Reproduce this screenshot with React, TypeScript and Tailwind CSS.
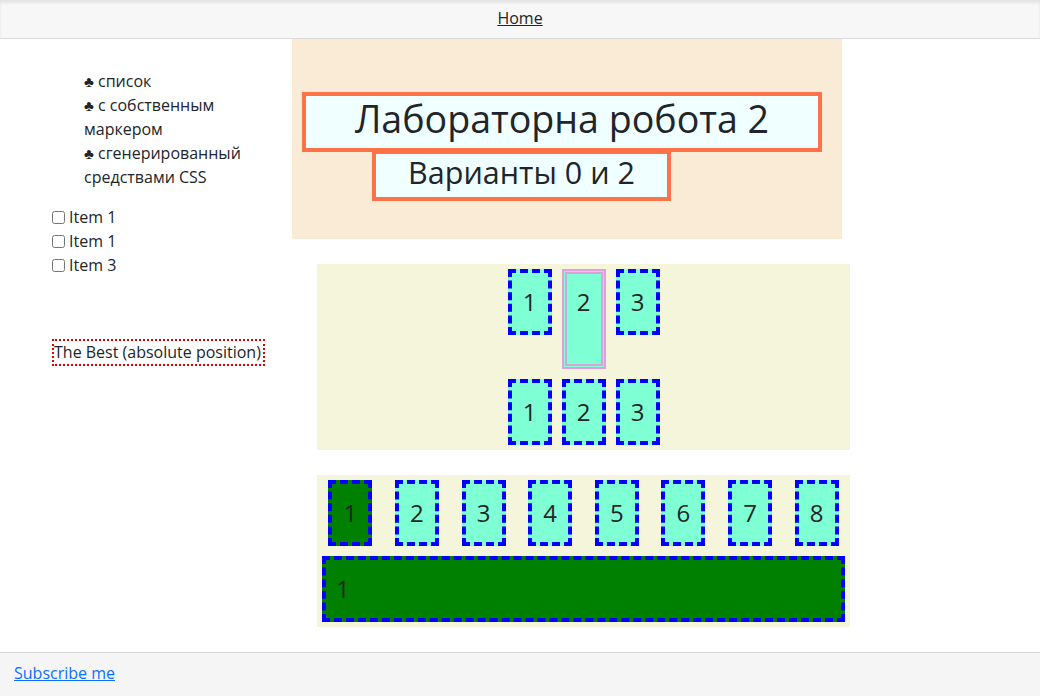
import React from "react";

const item =
  "w-[44px] h-[66px] m-[5px] border-[4px] border-dashed border-[#0000ff] bg-[#7fffd4] px-[10px] py-[11px] text-center text-[24px] leading-[36px] text-[#212529]";

const Club = () => <span className="leading-none text-[15px]">♣</span>;

export default function App() {
  return (
    <div className="min-h-[696px] flex flex-col bg-white font-['Open_Sans',sans-serif] text-[16px] leading-[24px] text-[#212529]">
      <header className="h-[39px] shrink-0 border-b border-[#d9d9d9] bg-[#f7f7f7] shadow-[inset_0_3px_3px_rgba(0,0,0,0.08)] flex items-center justify-center pb-[2px]">
        <a href="#" className="underline text-[#212529]">Home</a>
      </header>

      <div className="flex">
        <aside className="w-[292px] shrink-0 pl-[52px] pr-[20px]">
          <ul className="mt-[30px] mb-4 pl-8 list-none">
            <li className="h-[24px]"><Club /> список</li>
            <li><Club /> с собственным маркером</li>
            <li><Club /> сгенерированный средствами CSS</li>
          </ul>
          <div className="flex flex-col">
            <label className="flex items-center h-[24px]"><input type="checkbox" className="w-[13px] h-[13px] mr-[4px]" />Item 1</label>
            <label className="flex items-center h-[24px]"><input type="checkbox" className="w-[13px] h-[13px] mr-[4px]" />Item 1</label>
            <label className="flex items-center h-[24px]"><input type="checkbox" className="w-[13px] h-[13px] mr-[4px]" />Item 3</label>
          </div>
          <div className="mt-[62px] w-[213px] border-2 border-dotted border-[#e00000] leading-[23px] whitespace-nowrap">
            The Best (absolute position)
          </div>
        </aside>

        <main className="flex flex-col">
          <div className="w-[550px] h-[200px] bg-[#faebd7] pt-[53px]">
            <h1 className="ml-[10px] w-[520px] h-[60px] border-[4px] border-[#ff7146] bg-[#f0ffff] text-center text-[37.6px] leading-[45px] font-medium">
              Лабораторна робота 2
            </h1>
            <h2 className="relative ml-[80px] -mt-[2px] w-[299px] h-[51px] border-[4px] border-[#ff7146] bg-[#f0ffff] text-center text-[30.5px] leading-[37px] font-medium">
              Варианты 0 и 2
            </h2>
          </div>

          <section className="ml-[25px] mt-[25px] w-[533px] bg-[#f5f5dc] flex flex-col">
            <div className="flex justify-center items-start">
              <div className={item}>1</div>
              <div className="w-[44px] h-[100px] m-[5px] border-[5px] border-double border-[#dda0dd] bg-[#7fffd4] pt-[10px] text-center text-[24px] leading-[36px]">2</div>
              <div className={item}>3</div>
            </div>
            <div className="flex justify-center items-start">
              <div className={item}>1</div>
              <div className={item}>2</div>
              <div className={item}>3</div>
            </div>
          </section>

          <section className="ml-[25px] mt-[25px] mb-[25px] w-[533px] bg-[#f5f5dc] flex flex-col">
            <div className="flex justify-around">
              <div className="w-[44px] h-[66px] m-[5px] border-[4px] border-dashed border-[#0000ff] bg-[#008000] py-[11px] text-center text-[24px] leading-[36px]">1</div>
              <div className={item}>2</div>
              <div className={item}>3</div>
              <div className={item}>4</div>
              <div className={item}>5</div>
              <div className={item}>6</div>
              <div className={item}>7</div>
              <div className={item}>8</div>
            </div>
            <div className="h-[66px] m-[5px] border-[4px] border-dashed border-[#0000ff] bg-[#008000] px-[10px] py-[11px] text-left text-[24px] leading-[36px]">1</div>
          </section>
        </main>
      </div>

      <footer className="mt-auto h-[44px] shrink-0 border-t border-[#d9d9d9] bg-[#f5f5f5] px-[14px] pt-[8px]">
        <a href="#" className="underline text-[#0d6efd]">Subscribe me</a>
      </footer>
    </div>
  );
}
